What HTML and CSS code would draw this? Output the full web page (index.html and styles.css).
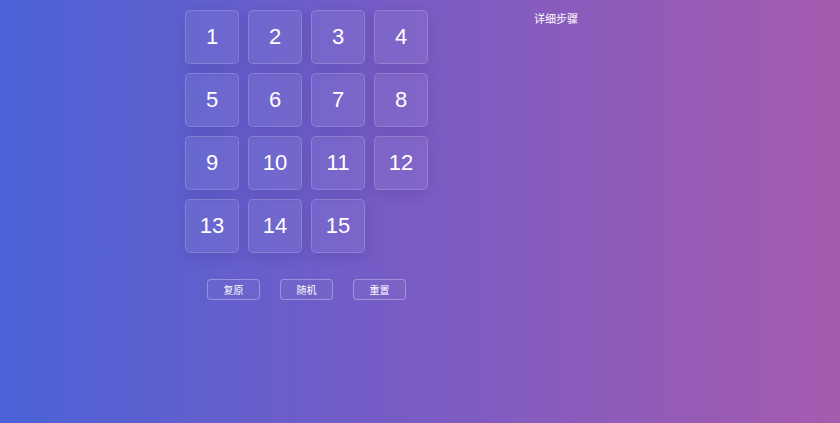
FILE: index.html
```html
<!DOCTYPE html>
<html lang="zh">
<head>
<meta charset="utf-8">
<link rel="stylesheet" href="styles.css">
</head>
<body>
<div class="app">
  <section class="game">
    <div class="board">
      <div class="tile">1</div><div class="tile">2</div><div class="tile">3</div><div class="tile">4</div>
      <div class="tile">5</div><div class="tile">6</div><div class="tile">7</div><div class="tile">8</div>
      <div class="tile">9</div><div class="tile">10</div><div class="tile">11</div><div class="tile">12</div>
      <div class="tile">13</div><div class="tile">14</div><div class="tile">15</div><div class="empty"></div>
    </div>
    <div class="controls">
      <button class="btn">复原</button>
      <button class="btn">随机</button>
      <button class="btn">重置</button>
    </div>
  </section>
  <section class="steps">
    <h3 class="steps-title">详细步骤</h3>
  </section>
</div>
</body>
</html>
```
FILE: styles.css
```css
html, body {
  margin: 0;
  height: 100%;
}
body {
  background: linear-gradient(to right, #4a62d6 0%, #7a5cc4 50%, #a55bae 100%);
  font-family: "Liberation Sans", Arial, "Noto Sans CJK SC", sans-serif;
  color: #fff;
  overflow: hidden;
}
.app {
  display: flex;
  padding: 10px 0 0 185px;
}
.game {
  display: flex;
  flex-direction: column;
  width: 243px;
}
.board {
  display: grid;
  grid-template-columns: repeat(4, 54px);
  grid-auto-rows: 54px;
  gap: 9px;
}
.tile {
  box-sizing: border-box;
  border: 1px solid rgba(255, 255, 255, 0.17);
  border-radius: 5px;
  background: rgba(255, 255, 255, 0.06);
  box-shadow: 0 4px 14px rgba(40, 20, 90, 0.14);
  display: flex;
  align-items: center;
  justify-content: center;
  font-size: 22px;
  color: #fff;
}
.controls {
  display: flex;
  justify-content: center;
  gap: 20px;
  margin-top: 26px;
}
.btn {
  box-sizing: border-box;
  width: 53px;
  height: 21px;
  padding: 0;
  border: 1px solid rgba(255, 255, 255, 0.3);
  border-radius: 4px;
  background: rgba(255, 255, 255, 0.04);
  color: #fff;
  font-family: "Noto Sans CJK SC", sans-serif;
  font-size: 10px;
}
.steps {
  margin-left: 44px;
  width: 168px;
  text-align: center;
}
.steps-title {
  margin: 0;
  padding-top: 1px;
  font-family: "Noto Sans CJK SC", sans-serif;
  font-weight: normal;
  font-size: 11px;
  line-height: 14px;
}
```
